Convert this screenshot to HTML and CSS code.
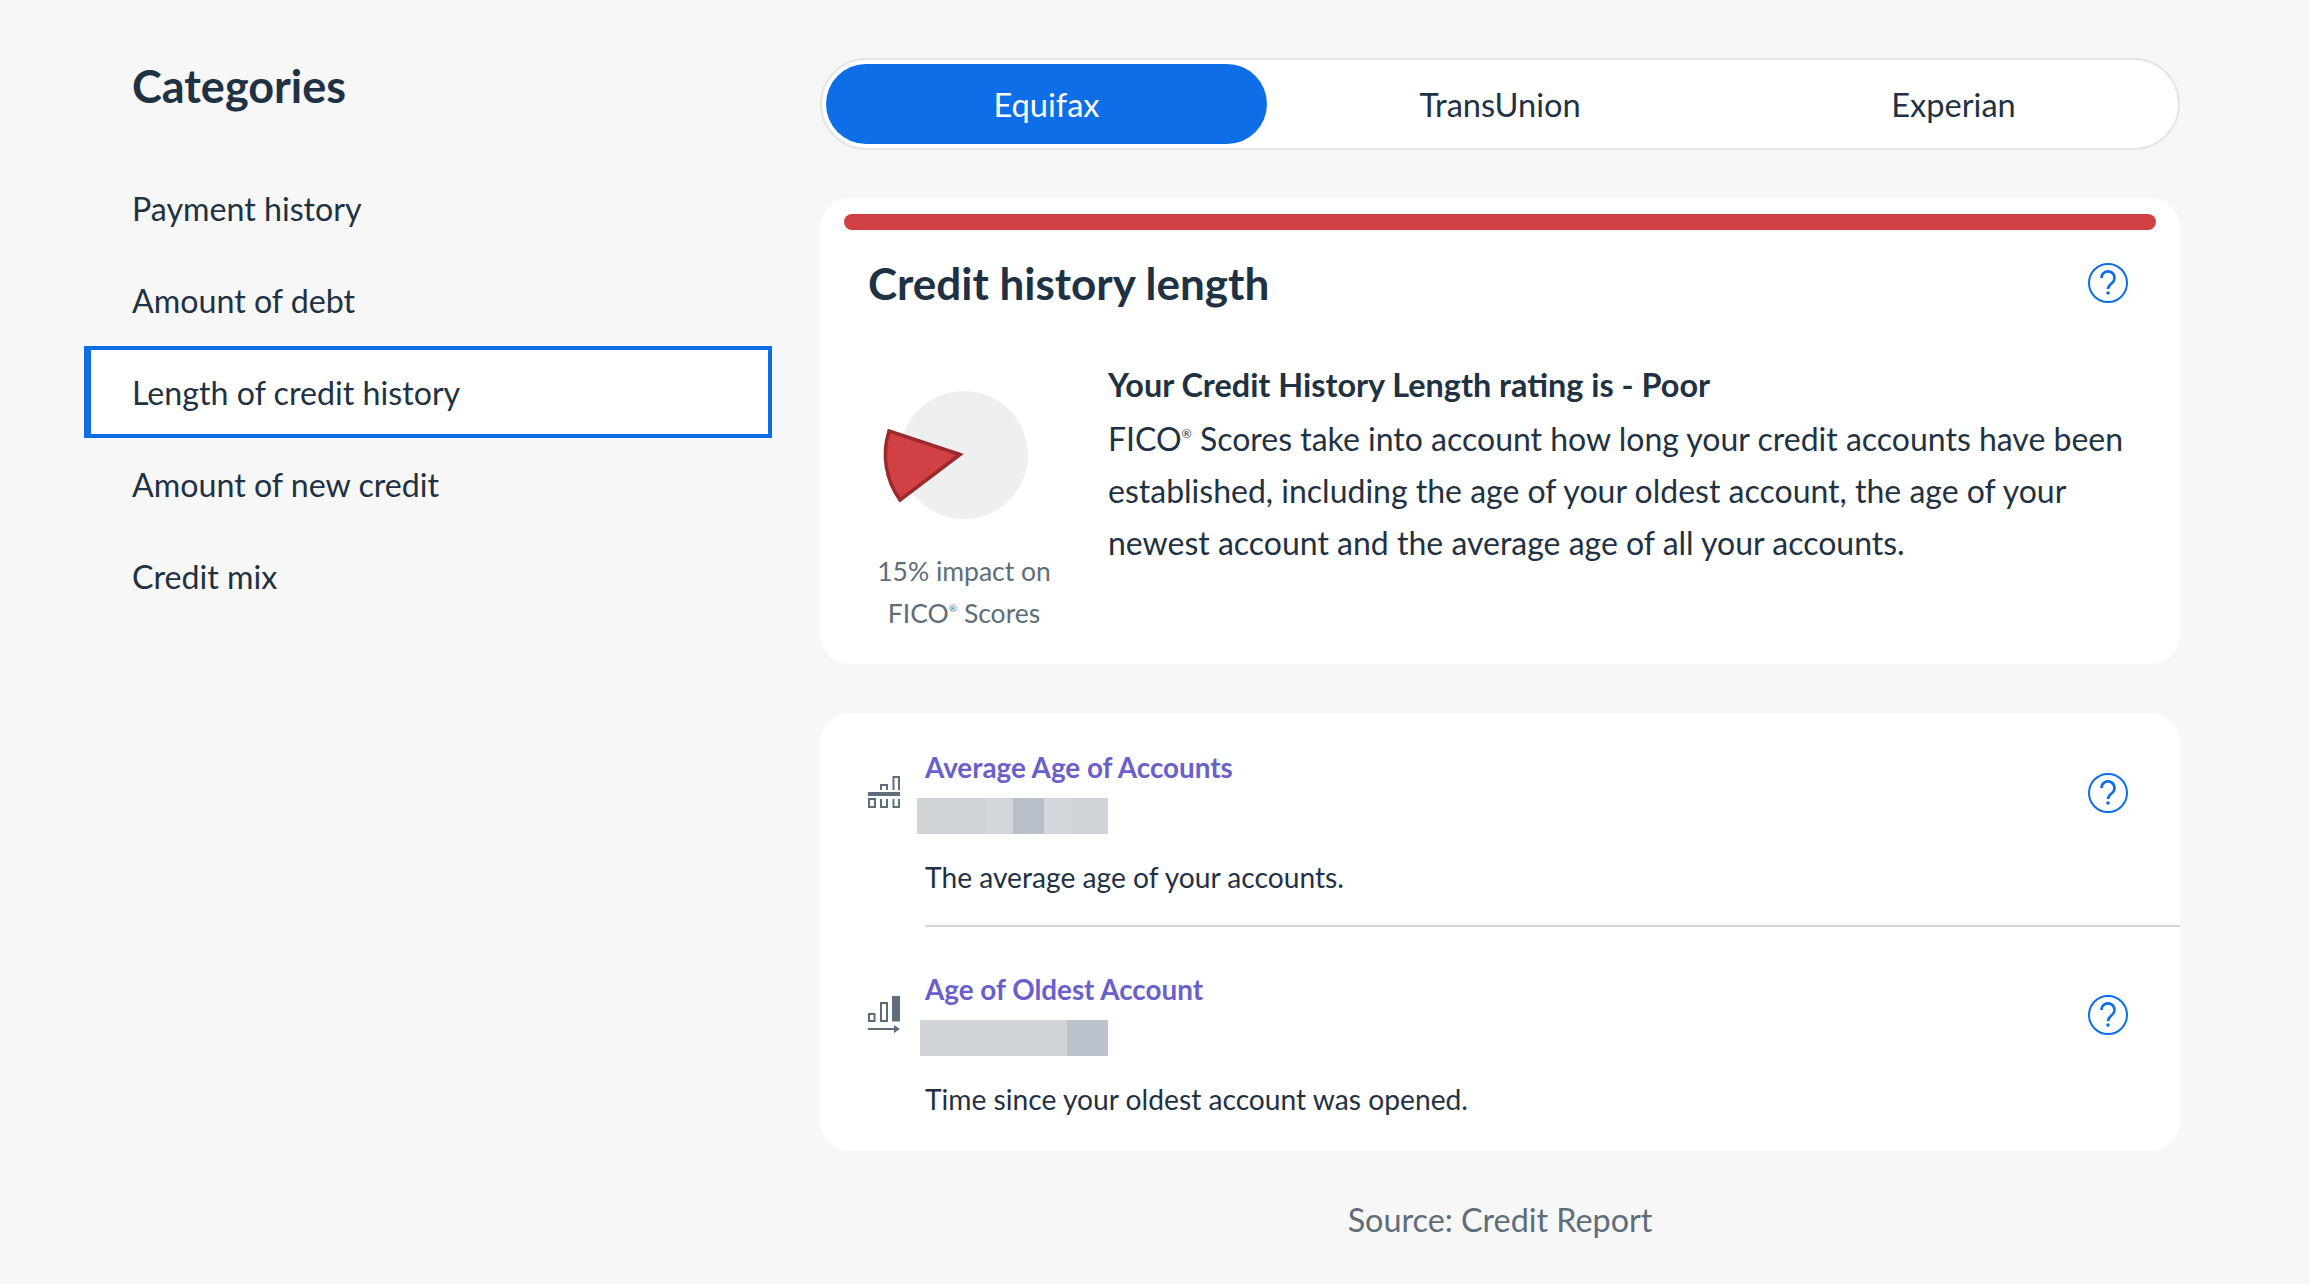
FILE: index.html
```html
<!DOCTYPE html>
<html lang="en">

<head>
    <meta charset="UTF-8">
    <meta name="viewport" content="width=device-width, initial-scale=1.0">
    <title>Credit history length</title>
    <link rel="stylesheet" href="styles.css">
</head>

<body>
    <div class="page">
        <div class="side">
            <h2 class="side-title">Categories</h2>
            <ul class="cats">
                <li>Payment history</li>
                <li>Amount of debt</li>
                <li class="active">Length of credit history</li>
                <li>Amount of new credit</li>
                <li>Credit mix</li>
            </ul>
        </div>

        <div class="main">
            <div class="tabs">
                <div class="tab on">Equifax</div>
                <div class="tab mid">TransUnion</div>
                <div class="tab">Experian</div>
            </div>

            <div class="card summary">
                <div class="rating-bar"></div>
                <div class="head">
                    <h1 class="head-title">Credit history length</h1>
                    <svg class="help" viewBox="0 0 40 40">
                        <circle cx="20" cy="20" r="19"></circle>
                        <path d="M13.5 15a6.5 6.5 0 1 1 10.500 5c-2.500 1.800-4 3-4 6"></path>
                        <circle class="dot" cx="20" cy="30" r="1.8"></circle>
                    </svg>
                </div>
                <div class="detail">
                    <div class="impact">
                        <svg class="pie" viewBox="0 0 192 144">
                            <circle cx="96" cy="72" r="64" fill="#eeeff0"></circle>
                            <path d="M92 71.500L21 48A78 78 0 0 0 32 117Z" fill="#d14143" stroke="#9c2a2c" stroke-width="3.500"></path>
                        </svg>
                        <div class="impact-text">15% impact on<br>FICO<sup>®</sup> Scores</div>
                    </div>
                    <div class="copy">
                        <div class="copy-title">Your Credit History Length rating is - Poor</div>
                        <p>
                            <span class="line">FICO<sup>®</sup> Scores take into account how long your credit accounts have been</span>
                            <span class="line">established, including the age of your oldest account, the age of your</span>
                            <span class="line">newest account and the average age of all your accounts.</span>
                        </p>
                    </div>
                </div>
            </div>

            <div class="card factors">
                <div class="row">
                    <svg class="row-icon icon-a" viewBox="0 0 32 32">
                        <path d="M13 14V9h6v5M25.500 14V1H31v13M1 23h6v8H1zM13 23v8h6v-8M25.500 23v8H31v-8"></path>
                        <rect class="solid" x="0" y="16" width="32" height="4"></rect>
                    </svg>
                    <div class="row-body">
                        <div class="row-text">
                            <div class="row-title">Average Age of Accounts</div>
                            <div class="blur blur-a"></div>
                            <div class="row-desc">The average age of your accounts.</div>
                        </div>
                        <svg class="help" viewBox="0 0 40 40">
                            <circle cx="20" cy="20" r="19"></circle>
                            <path d="M13.5 15a6.5 6.5 0 1 1 10.500 5c-2.500 1.800-4 3-4 6"></path>
                            <circle class="dot" cx="20" cy="30" r="1.8"></circle>
                        </svg>
                    </div>
                </div>
                <div class="row last">
                    <svg class="row-icon icon-b" viewBox="0 0 32 38">
                        <path d="M1 18h5.500v7H1zM13 7h6v18h-6z"></path>
                        <rect class="solid" x="24" y="0" width="8" height="25.500"></rect>
                        <path d="M0 33h28"></path>
                        <path class="solid" d="M26 29l6 4-6 4z"></path>
                    </svg>
                    <div class="row-body">
                        <div class="row-text">
                            <div class="row-title">Age of Oldest Account</div>
                            <div class="blur blur-b"></div>
                            <div class="row-desc">Time since your oldest account was opened.</div>
                        </div>
                        <svg class="help" viewBox="0 0 40 40">
                            <circle cx="20" cy="20" r="19"></circle>
                            <path d="M13.5 15a6.5 6.5 0 1 1 10.500 5c-2.500 1.800-4 3-4 6"></path>
                            <circle class="dot" cx="20" cy="30" r="1.8"></circle>
                        </svg>
                    </div>
                </div>
            </div>

            <div class="source">Source: Credit Report</div>
        </div>
    </div>
</body>

</html>
```

FILE: styles.css
```css
* {
    box-sizing: border-box;
}

body {
    margin: 0;
    background: #f7f7f7;
    color: #1f3244;
    font-family: "Lato", "Noto Sans", sans-serif;
}

.page {
    display: flex;
    gap: 48px;
    width: 2310px;
    height: 1284px;
    padding: 58px 130px 0 84px;
}

.side {
    width: 688px;
}

.side-title {
    margin: 0 0 48px;
    padding-left: 48px;
    font-size: 45px;
    line-height: 56px;
    font-weight: 700;
}

.cats {
    margin: 0;
    padding: 0;
    list-style: none;
}

.cats li {
    display: flex;
    align-items: center;
    height: 92px;
    padding: 1px 0 0 41px;
    border: 4px solid transparent;
    border-left-width: 7px;
    font-size: 32.2px;
}

.cats .active {
    background: #fff;
    border-color: #0d6ee8;
}

.main {
    width: 1360px;
}

.tabs {
    display: flex;
    height: 92px;
    padding: 4px;
    background: #fff;
    border: 2px solid #e4e5e7;
    border-radius: 46px;
}

.tab {
    display: flex;
    align-items: center;
    justify-content: center;
    width: 441px;
    border-radius: 40px;
    font-size: 32.6px;
}

.tab.mid {
    flex: 1;
}

.tab.on {
    background: #0d6ee8;
    color: #fff;
}

.card {
    background: #fff;
    border-radius: 30px;
}

.summary {
    margin-top: 48px;
    padding-top: 16px;
    height: 466px;
}

.rating-bar {
    height: 16px;
    margin: 0 24px;
    background: #d14143;
    border-radius: 8px;
}

.head {
    display: flex;
    align-items: center;
    justify-content: space-between;
    margin-top: 25px;
    padding: 0 52px 0 48px;
}

.head-title {
    margin: 0;
    font-size: 44px;
    line-height: 56px;
    font-weight: 700;
}

.help {
    flex: none;
    width: 40px;
    height: 40px;
    fill: none;
    stroke: #0d6ee8;
    stroke-width: 2;
}

.help path {
    stroke-width: 2.6;
}

.help .dot {
    fill: #0d6ee8;
    stroke: none;
}

.detail {
    display: flex;
    gap: 48px;
    margin-top: 48px;
    padding-left: 48px;
    padding-right: 52px;
}

.impact {
    flex: none;
    width: 192px;
    padding-top: 24px;
    text-align: center;
}

.pie {
    display: block;
    width: 192px;
    height: 144px;
}

.impact-text {
    margin-top: 23px;
    white-space: nowrap;
    font-size: 26.5px;
    line-height: 42px;
    color: #5d6d7a;
}

sup {
    font-size: 38%;
    line-height: 0;
    vertical-align: 1.1em;
}

.copy {
    flex: 1;
    font-size: 32px;
    line-height: 52px;
}

.copy-title {
    font-size: 32.4px;
    font-weight: 700;
}

.copy p {
    margin: 2px 0 0;
}

.copy .line {
    display: block;
    white-space: nowrap;
}

.factors {
    margin-top: 49px;
    height: 438px;
}

.row {
    display: flex;
    padding-left: 48px;
}

.row-icon {
    flex: none;
    width: 32px;
    fill: none;
    stroke: #5d6d7a;
    stroke-width: 2;
}

.row-icon .solid {
    fill: #5d6d7a;
    stroke: none;
}

.icon-a {
    height: 32px;
    margin-top: 63px;
}

.icon-b {
    height: 38px;
    margin-top: 69px;
}

.row-body {
    flex: 1;
    display: flex;
    justify-content: space-between;
    margin-left: 25px;
    padding: 37px 52px 30px 0;
    border-bottom: 2px solid #d1d5d9;
}

.row.last .row-body {
    padding-top: 45px;
    border-bottom: 0;
}

.row-body .help {
    margin-top: 23px;
}

.row-title {
    font-size: 27.8px;
    line-height: 36px;
    font-weight: 700;
    color: #6a60cc;
}

.blur {
    height: 36px;
    margin-top: 12px;
    width: 191px;
}

.blur-a {
    margin-left: -8px;
    background: linear-gradient(to right, #d1d5d9 68px, #d3d7db 68px, #d3d7db 96px, #b8bfcb 96px, #b8bfcb 127px, #d3d7db 127px, #d3d7db 155px, #d1d5d9 155px);
}

.blur-b {
    width: 188px;
    margin-left: -5px;
    background: linear-gradient(to right, #d1d5d9 147px, #bcc3cd 147px);
}

.row-desc {
    margin-top: 25px;
    font-size: 28.2px;
    line-height: 36px;
}

.source {
    margin-top: 51px;
    text-align: center;
    font-size: 32.3px;
    line-height: 36px;
    color: #5d6d7a;
}
```
